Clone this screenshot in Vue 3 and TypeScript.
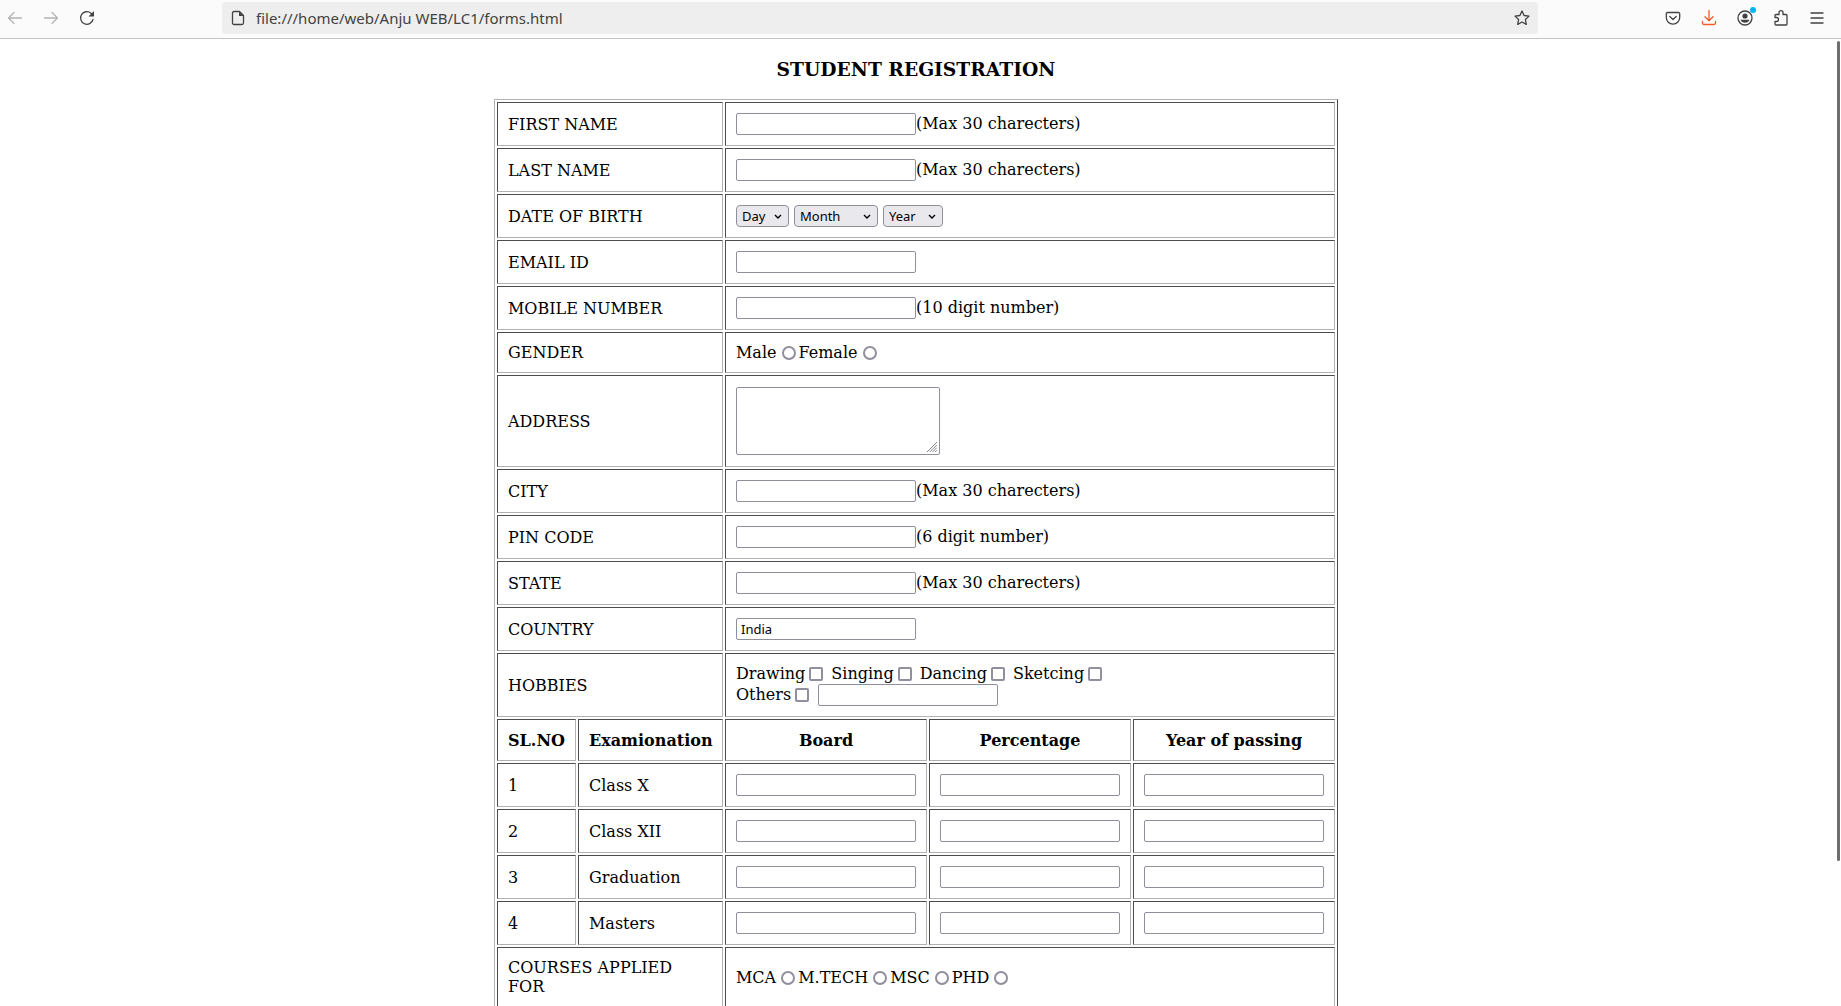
<script setup lang="ts">
interface Field {
  id: string
  label: string
  hint?: string
}

const nameFields: Field[] = [
  { id: 'first-name', label: 'FIRST NAME', hint: '(Max 30 charecters)' },
  { id: 'last-name', label: 'LAST NAME', hint: '(Max 30 charecters)' },
]
const contactFields: Field[] = [
  { id: 'email', label: 'EMAIL ID' },
  { id: 'mobile', label: 'MOBILE NUMBER', hint: '(10 digit number)' },
]
const placeFields: Field[] = [
  { id: 'city', label: 'CITY', hint: '(Max 30 charecters)' },
  { id: 'pin', label: 'PIN CODE', hint: '(6 digit number)' },
  { id: 'state', label: 'STATE', hint: '(Max 30 charecters)' },
]
const dateParts = [
  { name: 'Day', size: 'day' },
  { name: 'Month', size: 'month' },
  { name: 'Year', size: 'year' },
]
const genders = ['Male', 'Female']
const hobbies = ['Drawing', 'Singing', 'Dancing', 'Sketcing']
const exams = ['Class X', 'Class XII', 'Graduation', 'Masters']
const examColumns = ['Board', 'Percentage', 'Year of passing']
const courses = ['MCA', 'M.TECH', 'MSC', 'PHD']
</script>

<template>
  <div class="window">
    <header class="toolbar">
      <nav class="nav">
        <button class="tool faded" aria-label="Back">
          <svg viewBox="0 0 16 16"><path d="M14.500 8H1.500M7 2.500L1.500 8 7 13.500" /></svg>
        </button>
        <button class="tool faded" aria-label="Forward">
          <svg viewBox="0 0 16 16"><path d="M1.500 8H14.500M9 2.500L14.500 8 9 13.500" /></svg>
        </button>
        <button class="tool" aria-label="Reload">
          <svg viewBox="0 0 16 16">
            <path d="M14 9.500A6.300 6.300 0 1 1 12 3.200l1.500 1.500" />
            <path class="solid" d="M15 1v5.500H9.500z" />
          </svg>
        </button>
      </nav>
      <div class="address">
        <svg class="glyph" viewBox="0 0 16 16">
          <path d="M4 1.500h5.500l4 4V13a1.500 1.500 0 0 1-1.500 1.500H4A1.500 1.500 0 0 1 2.500 13V3A1.500 1.500 0 0 1 4 1.500z" />
          <path class="solid" d="M9 1.500V6h4.500z" />
        </svg>
        <input class="url" type="text" aria-label="Address" value="file:///home/web/Anju WEB/LC1/forms.html" />
        <button class="tool" aria-label="Bookmark">
          <svg viewBox="0 0 16 16">
            <path d="M8 1l2.100 4.500 4.900.6-3.600 3.400.9 4.900L8 12l-4.300 2.400.9-4.900L1 6.100l4.900-.6z" />
          </svg>
        </button>
      </div>
      <div class="actions">
        <button class="tool" aria-label="Save to Pocket">
          <svg viewBox="0 0 16 16">
            <path d="M2.500 2.500h11a1.200 1.200 0 0 1 1.200 1.200V7.500a6.700 6.700 0 0 1-13.400 0V3.700a1.200 1.200 0 0 1 1.200-1.200z" />
            <path d="M4.800 6.500L8 9.500l3.200-3" />
          </svg>
        </button>
        <button class="tool download" aria-label="Downloads">
          <svg viewBox="0 0 16 16">
            <path d="M8 .5v10M4 6.800l4 4 4-4M1.500 11.500v1.500a1.500 1.500 0 0 0 1.500 1.500h10a1.500 1.500 0 0 0 1.500-1.500v-1.500" />
          </svg>
        </button>
        <button class="tool account" aria-label="Account">
          <svg viewBox="0 0 16 16">
            <circle cx="8" cy="8" r="7" />
            <circle class="solid" cx="8" cy="6" r="2.600" />
            <path class="solid" d="M3.500 9.800h9c-.7 1.800-2.400 3-4.500 3s-3.800-1.200-4.500-3z" />
          </svg>
          <span class="badge"></span>
        </button>
        <button class="tool" aria-label="Extensions">
          <svg viewBox="0 0 16 16">
            <path d="M2 7.500V5.500a1 1 0 0 1 1-1h3V2.700a2 2 0 0 1 4 0v1.800h3a1 1 0 0 1 1 1V14a1 1 0 0 1-1 1H3a1 1 0 0 1-1-1v-2.500h1.500a2 2 0 0 0 0-4z" />
          </svg>
        </button>
        <button class="tool" aria-label="Menu">
          <svg viewBox="0 0 16 16"><path d="M2 3h12M2 8h12M2 13h12" /></svg>
        </button>
      </div>
    </header>

    <div class="viewport">
      <main class="page">
        <h3>STUDENT REGISTRATION</h3>
        <form>
          <table>
            <colgroup>
              <col class="col-no" />
              <col class="col-exam" />
              <col v-for="c in examColumns" :key="c" class="col-entry" />
            </colgroup>
            <tbody>
              <tr v-for="f in nameFields" :key="f.id">
                <td colspan="2"><label :for="f.id">{{ f.label }}</label></td>
                <td colspan="3">
                  <div class="line"><input :id="f.id" class="text" type="text" />{{ f.hint }}</div>
                </td>
              </tr>
              <tr>
                <td colspan="2">DATE OF BIRTH</td>
                <td colspan="3">
                  <div class="line dates">
                    <span v-for="d in dateParts" :key="d.name" class="picker" :class="d.size">
                      <select :aria-label="d.name"><option>{{ d.name }}</option></select>
                      <svg viewBox="0 0 8 6"><path d="M1 1l3 3 3-3" /></svg>
                    </span>
                  </div>
                </td>
              </tr>
              <tr v-for="f in contactFields" :key="f.id">
                <td colspan="2"><label :for="f.id">{{ f.label }}</label></td>
                <td colspan="3">
                  <div class="line"><input :id="f.id" class="text" type="text" />{{ f.hint }}</div>
                </td>
              </tr>
              <tr>
                <td colspan="2">GENDER</td>
                <td colspan="3">
                  <div class="choices">
                    <label v-for="g in genders" :key="g">{{ g }}<input type="radio" name="gender" :value="g" /></label>
                  </div>
                </td>
              </tr>
              <tr>
                <td colspan="2"><label for="address">ADDRESS</label></td>
                <td colspan="3">
                  <div class="area">
                    <textarea id="address"></textarea>
                    <svg viewBox="0 0 11 11"><path d="M0 11L11 0M3 11l8-8M6 11l5-5M9 11l2-2" /></svg>
                  </div>
                </td>
              </tr>
              <tr v-for="f in placeFields" :key="f.id">
                <td colspan="2"><label :for="f.id">{{ f.label }}</label></td>
                <td colspan="3">
                  <div class="line"><input :id="f.id" class="text" type="text" />{{ f.hint }}</div>
                </td>
              </tr>
              <tr>
                <td colspan="2"><label for="country">COUNTRY</label></td>
                <td colspan="3">
                  <div class="line"><input id="country" class="text" type="text" value="India" /></div>
                </td>
              </tr>
              <tr>
                <td colspan="2">HOBBIES</td>
                <td colspan="3">
                  <div class="hobbies">
                    <label v-for="h in hobbies" :key="h">{{ h }}<input type="checkbox" :value="h" /></label>
                  </div>
                  <div class="hobbies others">
                    <label>Others<input type="checkbox" value="Others" /></label>
                    <input class="text" type="text" aria-label="Other hobbies" />
                  </div>
                </td>
              </tr>
              <tr>
                <th>SL.NO</th>
                <th>Examionation</th>
                <th v-for="c in examColumns" :key="c">{{ c }}</th>
              </tr>
              <tr v-for="(exam, i) in exams" :key="exam">
                <td>{{ i + 1 }}</td>
                <td>{{ exam }}</td>
                <td v-for="c in examColumns" :key="c">
                  <div class="line"><input class="text" type="text" :aria-label="exam + ' ' + c" /></div>
                </td>
              </tr>
              <tr>
                <td colspan="2">COURSES APPLIED FOR</td>
                <td colspan="3">
                  <div class="choices">
                    <label v-for="c in courses" :key="c">{{ c }}<input type="radio" name="course" :value="c" /></label>
                  </div>
                </td>
              </tr>
            </tbody>
          </table>
        </form>
      </main>
      <div class="scrollbar"><div class="thumb"></div></div>
    </div>
  </div>
</template>

<style>
body {
  margin: 0;
  background: #fff;
}
</style>

<style scoped>
* {
  box-sizing: border-box;
}
.window {
  display: flex;
  flex-direction: column;
  height: 100vh;
  overflow: hidden;
  color: #000;
  font: 16px/19px "DejaVu Serif", serif;
}

/* Browser toolbar */
.toolbar {
  display: flex;
  flex: none;
  align-items: center;
  height: 39px;
  padding: 0 15px 3px 6px;
  border-bottom: 1px solid #c4c4c4;
  background: #fbfbfb;
}
.nav,
.actions {
  display: flex;
  gap: 18px;
}
.nav {
  width: 216px;
}
.address {
  display: flex;
  flex: 1;
  align-items: center;
  height: 32px;
  margin-right: 126px;
  padding: 0 7px 0 8px;
  border-radius: 4px;
  background: #eeeeee;
}
.url {
  flex: 1;
  min-width: 0;
  margin-left: 10px;
  padding: 0;
  border: 0;
  outline: 0;
  background: transparent;
  color: #424242;
  font: 15px/20px "Noto Sans", sans-serif;
}
.tool {
  position: relative;
  width: 18px;
  height: 18px;
  padding: 1px;
  border: 0;
  background: transparent;
  color: #424242;
}
.tool svg,
.glyph {
  display: block;
  width: 16px;
  height: 16px;
  overflow: visible;
  fill: none;
  stroke: currentColor;
  stroke-width: 1.3;
  stroke-linecap: round;
  stroke-linejoin: round;
}
.glyph {
  color: #424242;
}
.tool .solid,
.glyph .solid {
  fill: currentColor;
  stroke: none;
}
.faded {
  color: #b4b4b4;
}
.download {
  color: #f05a28;
}
.badge {
  position: absolute;
  top: -2px;
  right: -2px;
  width: 6px;
  height: 6px;
  border-radius: 50%;
  background: #00b3f4;
}

/* Page */
.viewport {
  display: flex;
  flex: 1;
  min-height: 0;
}
.page {
  flex: 1;
  overflow: hidden;
}
.scrollbar {
  display: flex;
  flex: none;
  justify-content: flex-end;
  width: 9px;
  padding: 2px 1px 0 0;
}
.thumb {
  width: 3px;
  height: 85%;
  border-radius: 2px;
  background: #6d6d6d;
}
h3 {
  margin: 19px 0;
  line-height: 22px;
  text-align: center;
}
table {
  width: 844px;
  margin: 0 auto;
  table-layout: fixed;
  border: 1px solid;
  border-color: #b2b2b2 #4c4c4c #4c4c4c #b2b2b2;
  border-spacing: 2px;
}
.col-no {
  width: 79px;
}
.col-exam {
  width: 145px;
}
.col-entry {
  width: 202px;
}
td,
th {
  padding: 10px;
  border: 1px solid;
  border-color: #4c4c4c #b2b2b2 #b2b2b2 #4c4c4c;
  vertical-align: middle;
}
th {
  padding-top: 11px;
  white-space: nowrap;
}

/* Controls */
.line {
  display: flex;
  align-items: flex-start;
  line-height: 21px;
}
.text {
  width: 180px;
  height: 22px;
  padding: 0 4px;
  border: 1px solid #8f8f9d;
  border-radius: 2px;
  background: #fff;
  color: #000;
  font: 13px/18px "Noto Sans", sans-serif;
}
.dates {
  gap: 5px;
}
.picker {
  position: relative;
}
.day {
  width: 53px;
}
.month {
  width: 84px;
}
.year {
  width: 60px;
}
.picker select {
  display: block;
  width: 100%;
  height: 22px;
  padding: 0 5px;
  border: 1px solid #8f8f9d;
  border-radius: 4px;
  appearance: none;
  background: #e9e9ed;
  color: #000;
  font: 13px/18px "Noto Sans", sans-serif;
}
.picker svg {
  position: absolute;
  top: 9px;
  right: 7px;
  width: 8px;
  height: 6px;
  fill: none;
  stroke: #000;
  stroke-width: 1.4;
  pointer-events: none;
}
.choices,
.choices label,
.hobbies label {
  display: flex;
  align-items: center;
}
.choices input,
.hobbies input[type="checkbox"] {
  width: 14px;
  height: 14px;
  margin: 0;
  border: 2px solid #8f8f9d;
  appearance: none;
  background: #fff;
}
.choices input {
  margin: 1px 3px 0 5px;
  border-radius: 50%;
}
.hobbies {
  display: flex;
  align-items: flex-start;
  gap: 8px;
  height: 20px;
}
.hobbies label {
  height: 18px;
}
.hobbies input[type="checkbox"] {
  margin: 1px 0 0 4px;
  border-radius: 2px;
}
.others {
  gap: 9px;
  height: 22px;
}
.others label {
  height: 20px;
}
.area {
  position: relative;
  width: 204px;
  padding: 1px 0;
}
textarea {
  display: block;
  width: 100%;
  height: 68px;
  padding: 2px;
  border: 1px solid #8f8f9d;
  border-radius: 2px;
  resize: none;
  font: 13px/16px "Liberation Mono", monospace;
}
.area svg {
  position: absolute;
  right: 3px;
  bottom: 4px;
  width: 10px;
  height: 10px;
  fill: none;
  stroke: #777;
  stroke-width: 1;
  pointer-events: none;
}
</style>
